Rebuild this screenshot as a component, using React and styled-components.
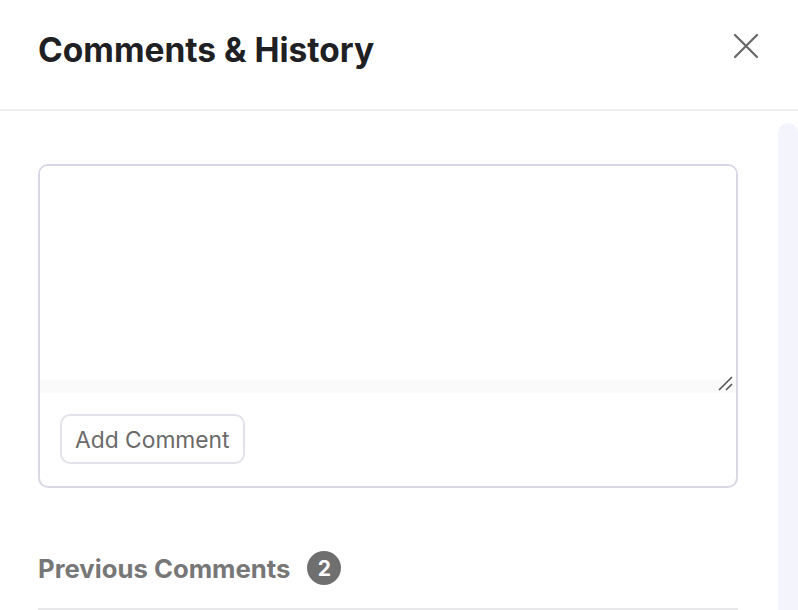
import React from "react";
import styled, { createGlobalStyle } from "styled-components";

const Global = createGlobalStyle`
  html, body { margin: 0; padding: 0; background: #fff; }
  body { font-family: Inter, "Noto Sans", sans-serif; width: 798px; height: 610px; overflow: hidden; }
  * { box-sizing: border-box; }
`;

const Panel = styled.div`
  width: 798px;
  height: 610px;
  display: flex;
  flex-direction: column;
  background: #fff;
`;

const Header = styled.header`
  height: 111px;
  flex: none;
  display: flex;
  align-items: center;
  justify-content: space-between;
  padding: 0 38px 10px 38px;
  border-bottom: 2px solid #ececee;
`;

const Title = styled.h1`
  margin: 0;
  font-size: 33.5px;
  font-weight: 700;
  color: #1f2023;
  letter-spacing: 0;
`;

const CloseButton = styled.button`
  border: 0;
  background: none;
  padding: 0;
  width: 28px;
  height: 28px;
  display: flex;
  align-items: center;
  justify-content: center;
  cursor: pointer;
  margin-top: -8px;
`;

const Body = styled.div`
  flex: 1;
  display: flex;
  min-height: 0;
`;

const Content = styled.div`
  width: 778px;
  padding: 53px 40px 0 38px;
  display: flex;
  flex-direction: column;
`;

const Track = styled.div`
  width: 20px;
  margin-top: 12px;
  background: #f4f5fc;
  border-radius: 10px 10px 0 0;
`;

const Card = styled.div`
  border: 2px solid #d9d7e5;
  border-radius: 10px;
  overflow: hidden;
  display: flex;
  flex-direction: column;
`;

const Field = styled.div`
  position: relative;
`;

const Textarea = styled.textarea`
  display: block;
  width: 100%;
  height: 227px;
  border: 0;
  outline: none;
  resize: none;
  font: inherit;
  padding: 12px;
  background: linear-gradient(to bottom, #ffffff calc(100% - 13px), #fafafb calc(100% - 13px));
`;

const Grip = styled.svg`
  position: absolute;
  right: 2px;
  bottom: 1px;
  pointer-events: none;
`;

const Footer = styled.div`
  padding: 21px 20px 23px 20px;
  display: flex;
`;

const Button = styled.button`
  height: 50px;
  padding: 0 13px;
  border: 2px solid #e3e2ea;
  border-radius: 10px;
  background: #fff;
  font-family: Inter, "Noto Sans", sans-serif;
  font-size: 22.8px;
  color: #6a6a6a;
  cursor: pointer;
`;

const SectionHead = styled.div`
  margin-top: 62px;
  display: flex;
  align-items: center;
  gap: 17px;
  height: 36px;
`;

const SectionTitle = styled.h2`
  margin: 0;
  font-size: 25.7px;
  font-weight: 700;
  color: #777777;
`;

const Badge = styled.span`
  width: 34px;
  height: 34px;
  border-radius: 50%;
  background: #6f6f6f;
  color: #fff;
  font-size: 21px;
  font-weight: 700;
  display: flex;
  align-items: center;
  justify-content: center;
`;

const Divider = styled.div`
  margin-top: 22px;
  height: 2px;
  background: #e8e8ea;
`;

export default function App() {
  return (
    <>
      <Global />
      <Panel>
        <Header>
          <Title>Comments &amp; History</Title>
          <CloseButton aria-label="Close">
            <svg width="26" height="26" viewBox="0 0 26 26" fill="none" stroke="#666" strokeWidth="2.2" strokeLinecap="round">
              <path d="M2 2 L24 24 M24 2 L2 24" />
            </svg>
          </CloseButton>
        </Header>
        <Body>
          <Content>
            <Card>
              <Field>
                <Textarea />
                <Grip width="16" height="16" viewBox="0 0 16 16" fill="none" stroke="#555" strokeWidth="1.6">
                  <path d="M1 14 L14 1 M8 14 L14 8" />
                </Grip>
              </Field>
              <Footer>
                <Button>Add Comment</Button>
              </Footer>
            </Card>
            <SectionHead>
              <SectionTitle>Previous Comments</SectionTitle>
              <Badge>2</Badge>
            </SectionHead>
            <Divider />
          </Content>
          <Track />
        </Body>
      </Panel>
    </>
  );
}
